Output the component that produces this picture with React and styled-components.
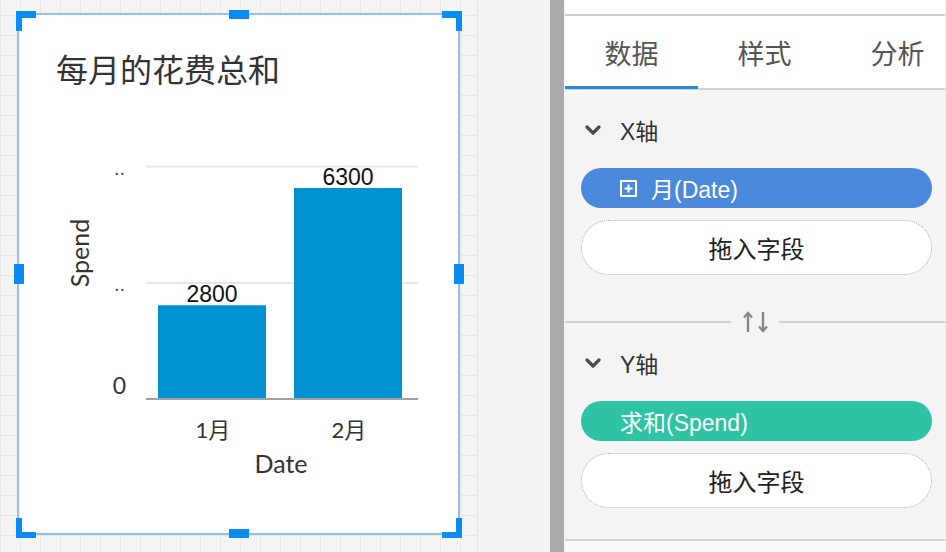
import styled, { createGlobalStyle } from 'styled-components';

const GlobalStyle = createGlobalStyle`
  html, body {
    margin: 0;
    padding: 0;
    background: #f3f3f3;
  }
  body {
    font-family: "Liberation Sans", "Noto Sans CJK SC", sans-serif;
  }
`;

const CJK = '"Noto Sans CJK SC", "Liberation Sans", sans-serif';
const LATIN = '"Liberation Sans", "Noto Sans CJK SC", sans-serif';

const ChevronDown = () => (
  <svg width="16" height="10" viewBox="0 0 16 10">
    <polyline
      points="2,2 8,8 14,2"
      fill="none"
      stroke="#4a4a4a"
      strokeWidth="3.2"
      strokeLinecap="round"
      strokeLinejoin="round"
    />
  </svg>
);

const BoxPlus = () => (
  <svg width="17" height="17" viewBox="0 0 17 17">
    <rect x="1" y="1" width="15" height="15" fill="none" stroke="#fff" strokeWidth="2" />
    <line x1="8.5" y1="4.5" x2="8.5" y2="12.5" stroke="#fff" strokeWidth="2" />
    <line x1="4.5" y1="8.5" x2="12.5" y2="8.5" stroke="#fff" strokeWidth="2" />
  </svg>
);

const SwapIcon = () => (
  <svg width="28" height="24" viewBox="0 0 28 24">
    <line x1="7" y1="3" x2="7" y2="22" stroke="#888" strokeWidth="2.4" />
    <polyline points="3,7.5 7,3 11,7.5" fill="none" stroke="#888" strokeWidth="2.4" />
    <line x1="22" y1="2" x2="22" y2="21" stroke="#888" strokeWidth="2.4" />
    <polyline points="18,16.5 22,21 26,16.5" fill="none" stroke="#888" strokeWidth="2.4" />
  </svg>
);

const bars = [
  { label: '1月', value: 2800, x: 158 },
  { label: '2月', value: 6300, x: 294 },
];

const BASE = 399;
const SCALE = 211 / 6300;

const Chart = () => (
  <S.ChartSvg width="439" height="443" viewBox="19 90 439 443">
    <line x1="146" y1="166.5" x2="418" y2="166.5" stroke="#e6e6e6" strokeWidth="2" />
    <line x1="146" y1="283" x2="418" y2="283" stroke="#e6e6e6" strokeWidth="2" />
    {bars.map((b) => {
      const h = b.value * SCALE;
      return (
        <g key={b.label}>
          <rect x={b.x} y={BASE - h} width="108" height={h} fill="#0092d1" />
          <text
            x={b.x + 54}
            y={BASE - h - 3}
            textAnchor="middle"
            fontSize="23"
            fill="#111"
            fontFamily={LATIN}
          >
            {b.value}
          </text>
          <text
            x={b.x + 55}
            y="438"
            textAnchor="middle"
            fontSize="22"
            fill="#333"
            fontFamily={'Lato, "Noto Sans CJK SC", sans-serif'}
          >
            {b.label}
          </text>
        </g>
      );
    })}
    <line x1="146" y1={BASE} x2="418" y2={BASE} stroke="#a0a0a0" strokeWidth="2" />
    <text x="125" y="175" textAnchor="end" fontSize="20" fill="#444" fontFamily={LATIN}>..</text>
    <text x="125" y="291" textAnchor="end" fontSize="20" fill="#444" fontFamily={LATIN}>..</text>
    <text x="126" y="394" textAnchor="end" fontSize="23" fill="#333" fontFamily="Lato, sans-serif">0</text>
    <text
      x="79"
      y="253"
      textAnchor="middle"
      dominantBaseline="central"
      fontSize="25"
      fill="#333"
      fontFamily="Lato, sans-serif"
      transform="rotate(-90 79 253)"
    >
      Spend
    </text>
    <text x="281" y="473" textAnchor="middle" fontSize="25" fill="#333" fontFamily="Lato, sans-serif">
      Date
    </text>
  </S.ChartSvg>
);

const Section = ({ title, field, color, icon }) => (
  <S.Section>
    <S.SectionHeader>
      <ChevronDown />
      <S.SectionTitle>{title}</S.SectionTitle>
    </S.SectionHeader>
    <S.FieldPill color={color}>
      {icon && <BoxPlus />}
      <span>{field}</span>
    </S.FieldPill>
    <S.DropZone>拖入字段</S.DropZone>
  </S.Section>
);

const App = () => {
  return (
    <>
      <GlobalStyle />
      <S.Page>
        <S.Canvas>
          <S.Card>
            <S.Corner pos="tl" />
            <S.Corner pos="tr" />
            <S.Corner pos="bl" />
            <S.Corner pos="br" />
            <S.EdgeHandle pos="top" />
            <S.EdgeHandle pos="bottom" />
            <S.EdgeHandle pos="left" />
            <S.EdgeHandle pos="right" />
            <S.Title>每月的花费总和</S.Title>
            <Chart />
          </S.Card>
        </S.Canvas>
        <S.Gutter />
        <S.Splitter />
        <S.Panel>
          <S.TopStrip />
          <S.Tabs>
            <S.Tab active>数据</S.Tab>
            <S.Tab>样式</S.Tab>
            <S.Tab>分析</S.Tab>
          </S.Tabs>
          <S.Content>
            <Section title="X轴" field="月(Date)" color="#4a89dc" icon />
            <S.Divider>
              <S.DividerLine />
              <SwapIcon />
              <S.DividerLine />
            </S.Divider>
            <S.SectionY>
              <Section title="Y轴" field="求和(Spend)" color="#2ec3a3" />
            </S.SectionY>
            <S.BottomLine />
            <S.Footer />
          </S.Content>
        </S.Panel>
      </S.Page>
    </>
  );
};
export default App;

const cornerPlace = {
  tl: 'top: -4px; left: -3px; border-width: 7px 0 0 6px;',
  tr: 'top: -4px; right: -4px; border-width: 7px 6px 0 0;',
  bl: 'bottom: -5px; left: -3px; border-width: 0 0 6px 6px;',
  br: 'bottom: -5px; right: -4px; border-width: 0 6px 6px 0;',
};

const edgePlace = {
  top: 'top: -5px; left: 50%; margin-left: -10px; width: 20px; height: 9px;',
  bottom: 'bottom: -5px; left: 50%; margin-left: -10px; width: 20px; height: 9px;',
  left: 'left: -5px; top: 50%; margin-top: -10px; width: 10px; height: 20px;',
  right: 'right: -6px; top: 50%; margin-top: -10px; width: 10px; height: 20px;',
};

const S = {
  Page: styled.div`
    display: flex;
    width: 946px;
    height: 552px;
    overflow: hidden;
  `,
  Canvas: styled.div`
    width: 478px;
    flex-shrink: 0;
    box-sizing: border-box;
    padding: 13px 0 0 17px;
    background-color: #f4f4f4;
    background-image: linear-gradient(to right, #e8e8e8 1px, transparent 1px),
      linear-gradient(to bottom, #e8e8e8 1px, transparent 1px);
    background-size: 20px 20px;
    background-position: 0 15px;
    border-right: 1px solid #e6e6e6;
  `,
  Card: styled.div`
    position: relative;
    width: 443px;
    height: 522px;
    box-sizing: border-box;
    border: 2px solid #93c0f0;
    background: #fff;
    display: flex;
    flex-direction: column;
  `,
  Corner: styled.div`
    position: absolute;
    width: 20px;
    height: 20px;
    box-sizing: border-box;
    border-style: solid;
    border-color: #0a8cf2;
    ${(p) => cornerPlace[p.pos]}
  `,
  EdgeHandle: styled.div`
    position: absolute;
    background: #0a8cf2;
    ${(p) => edgePlace[p.pos]}
  `,
  Title: styled.div`
    margin: 31px 0 0 37px;
    height: 44px;
    line-height: 44px;
    font-family: ${CJK};
    font-size: 32px;
    color: #333;
  `,
  ChartSvg: styled.svg`
    display: block;
  `,
  Gutter: styled.div`
    width: 72px;
    flex-shrink: 0;
    background: #f3f3f3;
  `,
  Splitter: styled.div`
    width: 14px;
    flex-shrink: 0;
    background: #aaaaaa;
    margin-right: 1px;
  `,
  Panel: styled.div`
    width: 380px;
    flex-shrink: 0;
    display: flex;
    flex-direction: column;
    background: #fff;
    overflow: hidden;
  `,
  TopStrip: styled.div`
    height: 14px;
    background: #fff;
    border-bottom: 2px solid #cfcfcf;
  `,
  Tabs: styled.div`
    display: flex;
    height: 72px;
    background: #fff;
    border-bottom: 2px solid #d2d2d2;
  `,
  Tab: styled.div`
    position: relative;
    width: 133px;
    flex-shrink: 0;
    display: flex;
    align-items: center;
    justify-content: center;
    font-family: ${CJK};
    font-size: 27px;
    color: #555;
    &::after {
      content: '';
      display: ${(p) => (p.active ? 'block' : 'none')};
      position: absolute;
      left: 0;
      right: 0;
      bottom: -1px;
      height: 3px;
      background: #2b88e0;
    }
  `,
  Content: styled.div`
    flex: 1;
    display: flex;
    flex-direction: column;
    background: #f4f4f4;
  `,
  Section: styled.div`
    display: flex;
    flex-direction: column;
    padding: 20px 13px 0 16px;
  `,
  SectionY: styled.div`
    margin-top: -11px;
  `,
  SectionHeader: styled.div`
    display: flex;
    align-items: center;
    gap: 19px;
    height: 40px;
    padding-left: 4px;
  `,
  SectionTitle: styled.span`
    font-family: ${LATIN};
    font-size: 23px;
    color: #333;
  `,
  FieldPill: styled.div`
    margin-top: 18px;
    height: 40px;
    border-radius: 20px;
    background: ${(p) => p.color};
    display: flex;
    align-items: center;
    gap: 14px;
    padding-left: 39px;
    font-family: ${LATIN};
    font-size: 23px;
    color: #fff;
  `,
  DropZone: styled.div`
    margin-top: 12px;
    height: 55px;
    box-sizing: border-box;
    border-radius: 28px;
    border: 1px dotted #a8a8a8;
    background: #fff;
    display: flex;
    align-items: center;
    justify-content: center;
    font-family: ${CJK};
    font-size: 24px;
    color: #222;
  `,
  Divider: styled.div`
    margin-top: 35px;
    height: 24px;
    display: flex;
    align-items: center;
    gap: 10px;
  `,
  DividerLine: styled.div`
    flex: 1;
    height: 2px;
    background: #d0d0d0;
  `,
  BottomLine: styled.div`
    margin-top: 31px;
    height: 2px;
    background: #d0d0d0;
  `,
  Footer: styled.div`
    flex: 1;
    background: #fafafa;
  `,
};
